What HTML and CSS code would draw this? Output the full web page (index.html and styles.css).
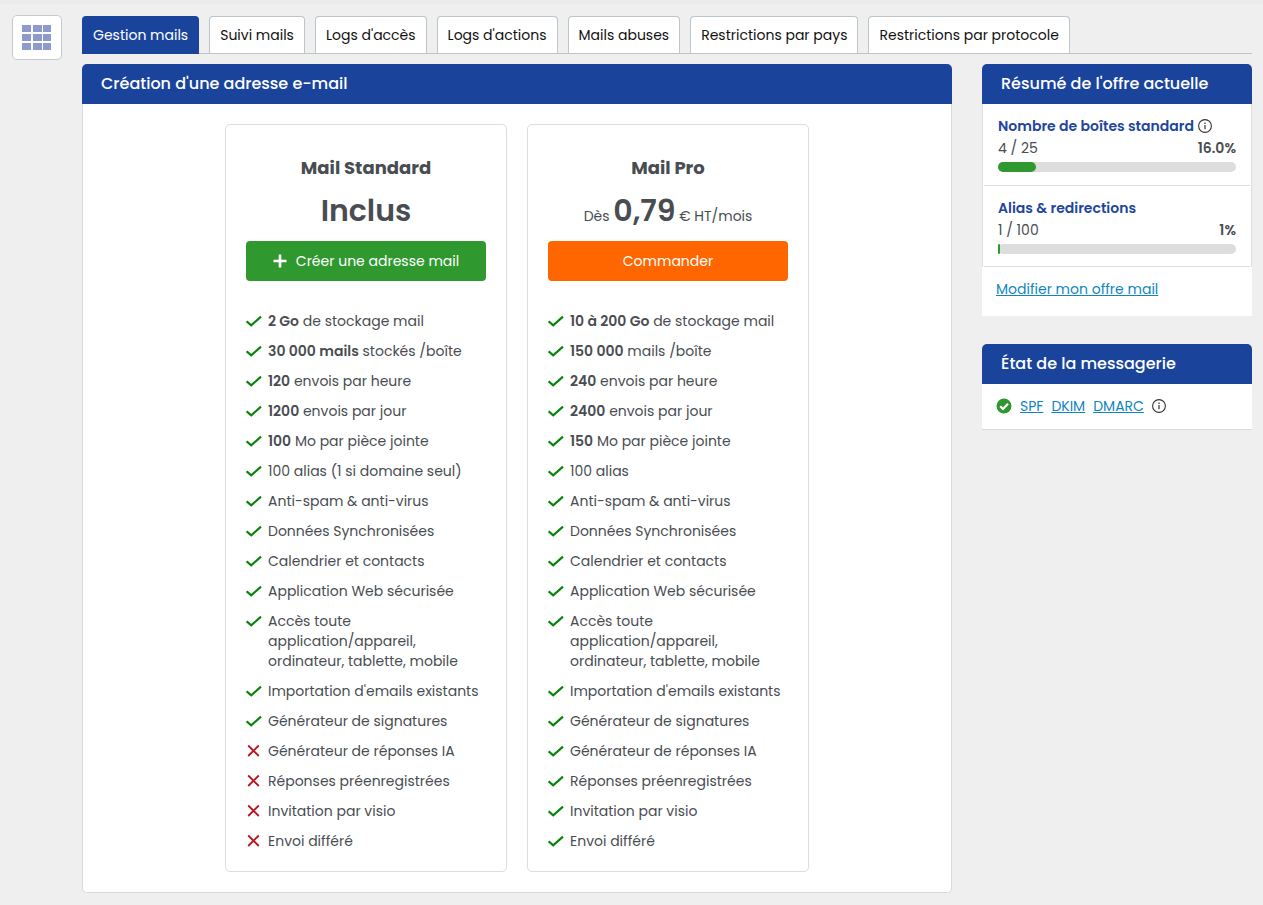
FILE: index.html
```html
<!DOCTYPE html>
<html lang="fr">
<head>
  <meta charset="UTF-8" />
  <meta name="viewport" content="width=device-width, initial-scale=1.0"/>
  <title>Gestion mails</title>
  <link rel="stylesheet" href="styles.css">
</head>
<body>

  <!-- shared icons -->
  <svg class="sprite" aria-hidden="true">
    <symbol id="check" viewBox="0 0 16 16"><path d="M.6 8.3 5.2 12.4 15 3.6" fill="none" stroke="currentColor" stroke-width="2.1"/></symbol>
    <symbol id="cross" viewBox="0 0 16 16"><path d="M2.2 2.5 12.8 13M12.8 2.5 2.2 13" fill="none" stroke="currentColor" stroke-width="1.8"/></symbol>
    <symbol id="plus" viewBox="0 0 14 14"><path d="M7 .5v13M.5 7h13" fill="none" stroke="currentColor" stroke-width="2.6"/></symbol>
    <symbol id="info" viewBox="0 0 14 14"><circle cx="7" cy="7" r="6.4" fill="none" stroke="currentColor" stroke-width="1.1"/><path d="M7 6v4.2M7 3.6v1.4" stroke="currentColor" stroke-width="1.2"/></symbol>
  </svg>

  <div class="layout">
    <button class="menu-btn" aria-label="Menu">
      <svg width="30" height="26" viewBox="0 0 30 26">
        <g fill="#8e9acb">
          <rect x="0" y="0" width="9" height="7"/><rect x="11" y="0" width="9" height="7"/><rect x="21" y="0" width="8" height="7"/>
          <rect x="0" y="9" width="9" height="7"/><rect x="11" y="9" width="9" height="7"/><rect x="21" y="9" width="8" height="7"/>
          <rect x="0" y="18" width="9" height="7"/><rect x="11" y="18" width="9" height="7"/><rect x="21" y="18" width="8" height="7"/>
        </g>
      </svg>
    </button>

    <div class="content">
      <nav class="tabs">
        <a href="#" class="tab active">Gestion mails</a>
        <a href="#" class="tab">Suivi mails</a>
        <a href="#" class="tab">Logs d'accès</a>
        <a href="#" class="tab">Logs d'actions</a>
        <a href="#" class="tab">Mails abuses</a>
        <a href="#" class="tab">Restrictions par pays</a>
        <a href="#" class="tab">Restrictions par protocole</a>
      </nav>

      <div class="columns">
        <main class="panel">
          <h2 class="panel-title">Création d'une adresse e-mail</h2>
          <div class="panel-body offers">

            <section class="offer">
              <h3>Mail Standard</h3>
              <p class="price"><strong>Inclus</strong></p>
              <button class="btn btn-green"><svg class="plus"><use href="#plus"/></svg>Créer une adresse mail</button>
              <ul class="features">
                <li><svg class="yes"><use href="#check"/></svg><span><b>2 Go</b> de stockage mail</span></li>
                <li><svg class="yes"><use href="#check"/></svg><span><b>30 000 mails</b> stockés /boîte</span></li>
                <li><svg class="yes"><use href="#check"/></svg><span><b>120</b> envois par heure</span></li>
                <li><svg class="yes"><use href="#check"/></svg><span><b>1200</b> envois par jour</span></li>
                <li><svg class="yes"><use href="#check"/></svg><span><b>100</b> Mo par pièce jointe</span></li>
                <li><svg class="yes"><use href="#check"/></svg><span>100 alias (1 si domaine seul)</span></li>
                <li><svg class="yes"><use href="#check"/></svg><span>Anti-spam &amp; anti-virus</span></li>
                <li><svg class="yes"><use href="#check"/></svg><span>Données Synchronisées</span></li>
                <li><svg class="yes"><use href="#check"/></svg><span>Calendrier et contacts</span></li>
                <li><svg class="yes"><use href="#check"/></svg><span>Application Web sécurisée</span></li>
                <li><svg class="yes"><use href="#check"/></svg><span>Accès toute application/appareil, ordinateur, tablette, mobile</span></li>
                <li><svg class="yes"><use href="#check"/></svg><span>Importation d'emails existants</span></li>
                <li><svg class="yes"><use href="#check"/></svg><span>Générateur de signatures</span></li>
                <li><svg class="no"><use href="#cross"/></svg><span>Générateur de réponses IA</span></li>
                <li><svg class="no"><use href="#cross"/></svg><span>Réponses préenregistrées</span></li>
                <li><svg class="no"><use href="#cross"/></svg><span>Invitation par visio</span></li>
                <li><svg class="no"><use href="#cross"/></svg><span>Envoi différé</span></li>
              </ul>
            </section>

            <section class="offer">
              <h3>Mail Pro</h3>
              <p class="price">Dès <strong>0,79</strong> € HT/mois</p>
              <button class="btn btn-orange">Commander</button>
              <ul class="features">
                <li><svg class="yes"><use href="#check"/></svg><span><b>10 à 200 Go</b> de stockage mail</span></li>
                <li><svg class="yes"><use href="#check"/></svg><span><b>150 000</b> mails /boîte</span></li>
                <li><svg class="yes"><use href="#check"/></svg><span><b>240</b> envois par heure</span></li>
                <li><svg class="yes"><use href="#check"/></svg><span><b>2400</b> envois par jour</span></li>
                <li><svg class="yes"><use href="#check"/></svg><span><b>150</b> Mo par pièce jointe</span></li>
                <li><svg class="yes"><use href="#check"/></svg><span>100 alias</span></li>
                <li><svg class="yes"><use href="#check"/></svg><span>Anti-spam &amp; anti-virus</span></li>
                <li><svg class="yes"><use href="#check"/></svg><span>Données Synchronisées</span></li>
                <li><svg class="yes"><use href="#check"/></svg><span>Calendrier et contacts</span></li>
                <li><svg class="yes"><use href="#check"/></svg><span>Application Web sécurisée</span></li>
                <li><svg class="yes"><use href="#check"/></svg><span>Accès toute application/appareil, ordinateur, tablette, mobile</span></li>
                <li><svg class="yes"><use href="#check"/></svg><span>Importation d'emails existants</span></li>
                <li><svg class="yes"><use href="#check"/></svg><span>Générateur de signatures</span></li>
                <li><svg class="yes"><use href="#check"/></svg><span>Générateur de réponses IA</span></li>
                <li><svg class="yes"><use href="#check"/></svg><span>Réponses préenregistrées</span></li>
                <li><svg class="yes"><use href="#check"/></svg><span>Invitation par visio</span></li>
                <li><svg class="yes"><use href="#check"/></svg><span>Envoi différé</span></li>
              </ul>
            </section>

          </div>
        </main>

        <aside class="sidebar">
          <section class="panel">
            <h2 class="panel-title">Résumé de l'offre actuelle</h2>
            <div class="quotas">
              <div class="quota">
                <h4>Nombre de boîtes standard <svg class="info"><use href="#info"/></svg></h4>
                <div class="quota-line"><span>4 / 25</span><b>16.0%</b></div>
                <div class="bar"><div class="bar-fill" style="width: 16%"></div></div>
              </div>
              <div class="quota">
                <h4>Alias &amp; redirections</h4>
                <div class="quota-line"><span>1 / 100</span><b>1%</b></div>
                <div class="bar"><div class="bar-fill" style="width: 1%"></div></div>
              </div>
            </div>
            <div class="panel-footer"><a href="#">Modifier mon offre mail</a></div>
          </section>

          <section class="panel">
            <h2 class="panel-title">État de la messagerie</h2>
            <div class="status">
              <svg class="status-ok" viewBox="0 0 16 16"><circle cx="8" cy="8" r="7.5" fill="#2f972f"/><path d="M4.2 8.3 7 11l5-5.2" fill="none" stroke="#fff" stroke-width="2.2"/></svg>
              <a href="#">SPF</a>
              <a href="#">DKIM</a>
              <a href="#">DMARC</a>
              <svg class="info"><use href="#info"/></svg>
            </div>
          </section>
        </aside>
      </div>
    </div>
  </div>

</body>
</html>
```
FILE: styles.css
```css
* { box-sizing: border-box; margin: 0; padding: 0; }

body {
  background-color: #efefef;
  border-top: 4px solid #ebebeb;
  font-family: Poppins, Inter, sans-serif;
  font-size: 14px;
  line-height: 20px;
  color: #494d52;
}

a { color: #0f86c1; text-underline-offset: 1px; }

b { font-weight: 600; }

.sprite { display: none; }

.layout {
  display: flex;
  align-items: flex-start;
  gap: 20px;
  padding: 11px 11px 12px 12px;
}

.menu-btn {
  display: flex;
  align-items: center;
  justify-content: center;
  flex: none;
  width: 50px;
  height: 45px;
  background-color: #fff;
  border: 1px solid #c5cad0;
  border-radius: 5px;
  cursor: pointer;
}

.content {
  flex: 1;
  min-width: 0;
  padding-top: 1px;
}

.tabs {
  display: flex;
  gap: 10px;
  border-bottom: 1px solid #bcc5ca;
  margin-bottom: 10px;
}

.tab {
  padding: 8px 10px;
  background-color: #fff;
  border: 1px solid #bcc5ca;
  border-bottom: none;
  border-radius: 4px 4px 0 0;
  color: #111;
  white-space: nowrap;
  text-decoration: none;
}

.tab.active {
  background-color: #1a449c;
  border-color: #1a449c;
  color: #fff;
  margin-bottom: -1px;
}

.columns {
  display: grid;
  grid-template-columns: 1fr 270px;
  align-items: start;
  gap: 30px;
}

.panel-title {
  padding: 0 19px;
  background-color: #1a449c;
  border-radius: 5px 5px 0 0;
  color: #fff;
  font-size: 16px;
  font-weight: 500;
  line-height: 40px;
}

.panel-body {
  background-color: #fff;
  border: 1px solid #d9d9d9;
  border-top: none;
  border-radius: 0 0 5px 5px;
  padding: 20px;
}

.offers {
  display: flex;
  justify-content: center;
  gap: 20px;
}

.offer {
  width: 282px;
  padding: 31px 20px 20px;
  border: 1px solid #ddd;
  border-radius: 5px;
}

.offer h3 {
  font-size: 18px;
  font-weight: 700;
  line-height: 24px;
  text-align: center;
}

.price {
  margin: 10px 0;
  height: 41px;
  line-height: 41px;
  text-align: center;
}

.price strong {
  font-size: 30px;
  font-weight: 600;
}

.btn {
  display: flex;
  align-items: center;
  justify-content: center;
  gap: 9px;
  width: 100%;
  height: 40px;
  border: none;
  border-radius: 4px;
  color: #fff;
  font-family: inherit;
  font-size: 14px;
  line-height: 20px;
  cursor: pointer;
}

.btn-green { background-color: #2f992f; }
.btn-orange { background-color: #ff6600; }

.plus { width: 14px; height: 14px; }

.features {
  display: flex;
  flex-direction: column;
  gap: 10px;
  margin-top: 30px;
  list-style: none;
}

.features li {
  display: flex;
  gap: 6px;
}

.features svg {
  flex: none;
  width: 16px;
  height: 16px;
  margin-top: 2px;
}

.yes { color: #078307; }
.no { color: #b9131d; }

.sidebar {
  display: flex;
  flex-direction: column;
  gap: 28px;
}

.quotas {
  background-color: #fff;
  border: 1px solid #ddd;
  border-width: 0 1px;
}

.quota {
  margin: 0 1px;
  padding: 12px 14px;
  border-bottom: 1px solid #ddd;
}

.quota:first-child { padding-bottom: 13px; }

.quota h4 {
  display: flex;
  align-items: center;
  gap: 4px;
  color: #21459c;
  font-size: 14px;
  font-weight: 600;
}

.quota-line {
  display: flex;
  justify-content: space-between;
  padding: 2px 0 4px;
}

.info {
  width: 14px;
  height: 14px;
  color: #333;
}

.bar {
  height: 10px;
  background-color: #ddd;
  border-radius: 5px;
}

.bar-fill {
  height: 100%;
  background-color: #2f992f;
  border-radius: 5px;
}

.panel-footer {
  background-color: #fff;
  padding: 12px 14px 17px;
}

.status {
  display: flex;
  align-items: center;
  gap: 8px;
  padding: 12px 14px 13px;
  background-color: #fff;
  border-bottom: 1px solid #d9d9d9;
}

.status-ok { width: 16px; height: 16px; }
```
